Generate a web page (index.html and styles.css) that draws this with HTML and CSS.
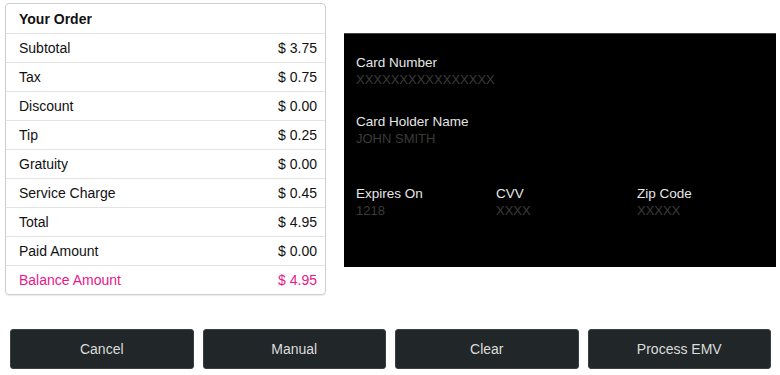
FILE: index.html
```html
<!DOCTYPE html>
<html lang="en">
<head>
    <meta charset="UTF-8">
    <meta name="viewport" content="width=device-width, initial-scale=1.0">
    <title>Payment</title>
    <link rel="stylesheet" href="styles.css">
</head>
<body>
    <div class="top">
        <div class="order">
            <div class="row head">Your Order</div>
            <div class="row"><span>Subtotal</span><span>$ 3.75</span></div>
            <div class="row"><span>Tax</span><span>$ 0.75</span></div>
            <div class="row"><span>Discount</span><span>$ 0.00</span></div>
            <div class="row"><span>Tip</span><span>$ 0.25</span></div>
            <div class="row"><span>Gratuity</span><span>$ 0.00</span></div>
            <div class="row"><span>Service Charge</span><span>$ 0.45</span></div>
            <div class="row"><span>Total</span><span>$ 4.95</span></div>
            <div class="row"><span>Paid Amount</span><span>$ 0.00</span></div>
            <div class="row balance"><span>Balance Amount</span><span>$ 4.95</span></div>
        </div>

        <div class="card">
            <div class="field">
                <div class="label">Card Number</div>
                <div class="value">XXXXXXXXXXXXXXXX</div>
            </div>
            <div class="field">
                <div class="label">Card Holder Name</div>
                <div class="value">JOHN SMITH</div>
            </div>
            <div class="cols">
                <div class="field">
                    <div class="label">Expires On</div>
                    <div class="value">1218</div>
                </div>
                <div class="field">
                    <div class="label">CVV</div>
                    <div class="value">XXXX</div>
                </div>
                <div class="field">
                    <div class="label">Zip Code</div>
                    <div class="value">XXXXX</div>
                </div>
            </div>
        </div>
    </div>

    <div class="actions">
        <button>Cancel</button>
        <button>Manual</button>
        <button>Clear</button>
        <button>Process EMV</button>
    </div>
</body>
</html>
```

FILE: styles.css
```css
body {
    font-family: "Liberation Sans", Arial, sans-serif;
    margin: 0;
    background: #fff;
    color: #111;
}

.top {
    display: flex;
    align-items: flex-start;
}

.order {
    width: 319px;
    margin: 3px 0 0 5px;
    border: 1px solid #cfcfcf;
    border-radius: 4px;
    box-shadow: 0 1px 1px rgba(0,0,0,0.08);
}

.row {
    display: flex;
    justify-content: space-between;
    align-items: center;
    height: 28px;
    padding: 0 8px 0 13px;
    font-size: 14px;
    border-top: 1px solid #e3e3e3;
}

.row:first-child {
    border-top: none;
    height: 29px;
}

.head {
    font-weight: bold;
}

.balance {
    color: #e8178a;
}

.card {
    width: 408px;
    height: 213px;
    margin: 33px 0 0 18px;
    padding: 20px 12px 0 12px;
    background: #000;
    border-top: 1px solid #444;
}

.field {
    margin-bottom: 25px;
}

.label {
    font-size: 13.5px;
    color: #e6e6e6;
    line-height: 17px;
}

.value {
    font-size: 13px;
    color: #3b3b3b;
    line-height: 17px;
}

.cols {
    display: grid;
    grid-template-columns: 140px 141px 1fr;
    margin-top: 38px;
}

.actions {
    display: grid;
    grid-template-columns: repeat(4, 1fr);
    gap: 9px;
    padding: 0 9px 0 10px;
    margin-top: 34px;
}

button {
    height: 40px;
    font-family: "Liberation Sans", Arial, sans-serif;
    font-size: 14px;
    color: #dcdcdc;
    background: #212628;
    border: 1px solid #3a3f41;
    border-radius: 3px;
}
```
